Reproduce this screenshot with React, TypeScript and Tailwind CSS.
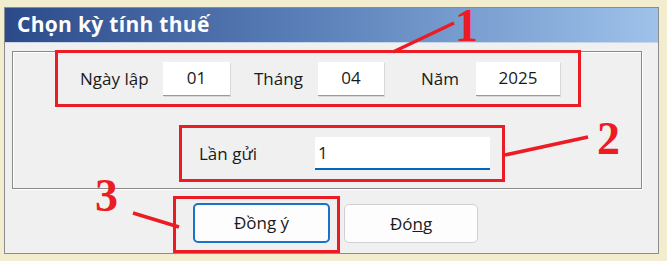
import React from 'react';

const ui = { fontFamily: '"Open Sans", "Noto Sans", sans-serif' };
const mark = { fontFamily: '"Liberation Serif", serif' };

function Field({ value, width, center = true }: { value: string; width: string; center?: boolean }) {
    return (
        <div
            className={`${width} h-[34px] bg-white border-b border-[#9a9a9a] shadow-[1px_1px_0_#d8d8d8] flex items-center text-[17px] text-[#1a1a1a] ${
                center ? 'justify-center' : 'justify-start pl-[3px]'
            }`}
        >
            {value}
        </div>
    );
}

export default function App() {
    return (
        <div className="relative w-[667px] h-[261px] overflow-hidden bg-[#f3edcf] pt-[7px] pl-[4px]" style={ui}>
            {/* dialog window */}
            <div className="w-[655px] h-[247px] border border-[#8c8c8c] bg-[#f0f0f0] flex flex-col">
                <div className="h-[35px] shrink-0 bg-gradient-to-r from-[#2c4a8a] via-[#5f84bc] to-[#9ec2ea] flex items-center pl-[12px] border-b border-[#c8d6ea]">
                    <span className="text-white font-bold text-[21px] tracking-[0.3px]">Chọn kỳ tính thuế</span>
                </div>

                {/* group box */}
                <div className="ml-[7px] mt-[8px] w-[630px] h-[140px] border border-[#8a8a8a] shadow-[inset_1px_1px_0_#ffffff,1px_1px_0_#ffffff] relative">
                    <div className="absolute left-[42px] -top-[2px] w-[526px] h-[57px] border-[3px] border-[#ec1c24] flex items-center pl-[22px] text-[17px] text-[#1a1a1a]">
                        <span className="w-[83px]">Ngày lập</span>
                        <Field value="01" width="w-[67px]" />
                        <span className="ml-[24px] w-[64px]">Tháng</span>
                        <Field value="04" width="w-[66px]" />
                        <span className="ml-[37px] w-[55px]">Năm</span>
                        <Field value="2025" width="w-[84px]" />
                    </div>
                    <div className="absolute left-[166px] top-[73px] w-[326px] h-[57px] border-[3px] border-[#ec1c24] flex items-center pl-[17px] text-[17px] text-[#1a1a1a]">
                        <span className="w-[116px]">Lần gửi</span>
                        <div className="w-[175px] h-[33px] bg-white border-b-2 border-[#0067c0] flex items-center pl-[3px] text-[17px]">1</div>
                    </div>
                </div>

                {/* buttons */}
                <div className="flex mt-[7px] ml-[168px] items-start">
                    <div className="w-[167px] h-[57px] border-[3px] border-[#ec1c24] pl-[17px] pt-[4px]">
                        <button className="w-[137px] h-[40px] rounded-[5px] border-2 border-[#1a73c8] bg-[#fdfdfd] text-[17px] text-[#1a1a1a]">
                            Đồn<span className="underline">g</span> ý
                        </button>
                    </div>
                    <button className="ml-[4px] mt-[8px] w-[134px] h-[39px] rounded-[5px] border border-[#d0d0d0] bg-[#fdfdfd] text-[17px] text-[#1a1a1a]">
                        Đó<span className="underline">n</span>g
                    </button>
                </div>
            </div>

            {/* annotations */}
            <svg className="absolute inset-0 pointer-events-none" width="667" height="261">
                <line x1="393" y1="52" x2="454" y2="23" stroke="#ec1c24" strokeWidth="3.5" />
                <line x1="505" y1="155" x2="588" y2="137" stroke="#ec1c24" strokeWidth="3.5" />
                <line x1="133" y1="213" x2="179" y2="227" stroke="#ec1c24" strokeWidth="3.5" />
            </svg>
            <span className="absolute left-[455px] top-[0px] text-[46px] leading-[52px] font-bold text-[#ec1c24]" style={mark}>1</span>
            <span className="absolute left-[597px] top-[113px] text-[46px] leading-[52px] font-bold text-[#ec1c24]" style={mark}>2</span>
            <span className="absolute left-[95px] top-[170px] text-[46px] leading-[52px] font-bold text-[#ec1c24]" style={mark}>3</span>
        </div>
    );
}
